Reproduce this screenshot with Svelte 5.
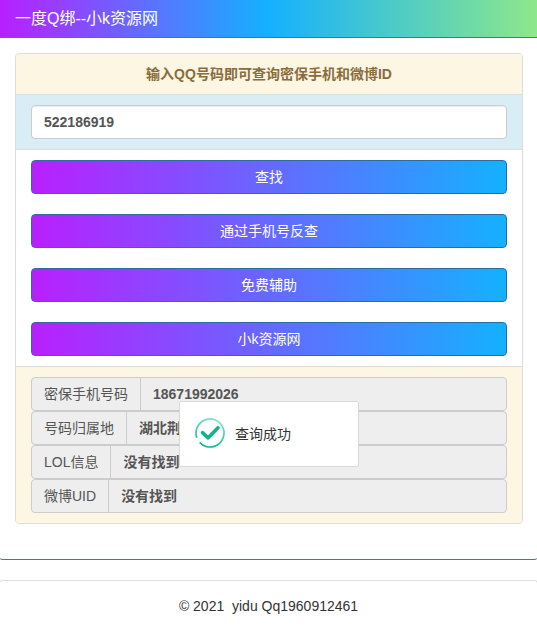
<script lang="ts">
	const actions = ['查找', '通过手机号反查', '免费辅助', '小k资源网'];

	const results = [
		{ label: '密保手机号码', value: '18671992026' },
		{ label: '号码归属地', value: '湖北荆州' },
		{ label: 'LOL信息', value: '没有找到' },
		{ label: '微博UID', value: '没有找到' }
	];
</script>

<div class="page">
	<section class="panel-main">
		<header class="main-heading">一度Q绑--小k资源网</header>
		<div class="main-body">
			<div class="panel">
				<div class="item tips">输入QQ号码即可查询密保手机和微博ID</div>
				<div class="item search">
					<input class="field" type="text" value="522186919" />
				</div>
				<div class="item buttons">
					{#each actions as action}
						<button class="btn" type="button">{action}</button>
					{/each}
				</div>
				<div class="item results">
					{#each results as row}
						<div class="group">
							<span class="addon">{row.label}</span>
							<span class="value">{row.value}</span>
						</div>
					{/each}
				</div>
			</div>
		</div>
	</section>

	<footer class="footer">© 2021&nbsp; yidu Qq1960912461</footer>

	<div class="toast">
		<svg class="toast-icon" width="30" height="30" viewBox="0 0 30 30" fill="none">
			<defs>
				<linearGradient id="ring" gradientUnits="userSpaceOnUse" x1="24" y1="3" x2="6" y2="27">
					<stop offset="0" stop-color="#0fb592" />
					<stop offset="1" stop-color="#7fe3d0" />
				</linearGradient>
			</defs>
			<circle cx="15" cy="15" r="14" stroke="url(#ring)" stroke-width="1.7" stroke-dasharray="82 6" transform="rotate(160 15 15)" />
			<path d="M7.5 14.6 L13.2 19.8 L23 9.8" stroke="#10b48f" stroke-width="3.6" stroke-linecap="round" stroke-linejoin="round" />
		</svg>
		<span>查询成功</span>
	</div>
</div>

<style>
	:global(body) {
		margin: 0;
		background: #fff;
		font-family: 'Liberation Sans', 'Noto Sans CJK SC', sans-serif;
		font-size: 14px;
		line-height: 20px;
		color: #333;
	}

	.page {
		position: relative;
		height: 630px;
		overflow: hidden;
	}

	.panel-main {
		height: 560px;
		box-sizing: border-box;
		margin: 0 -1px;
		border-bottom: 1px solid #337ab7;
		border-radius: 0 0 4px 4px;
	}

	.main-heading {
		box-sizing: border-box;
		height: 38px;
		padding: 9px 16px;
		font-size: 16px;
		line-height: 20px;
		color: #fff;
		border-bottom: 1px solid #337ab7;
		background: linear-gradient(to right, #b91fff 0%, #14b1ff 50%, #8ee88a 100%);
	}

	.main-body {
		padding: 15px 15px 15px 16px;
	}

	.panel {
		border: 1px solid #ddd;
		border-radius: 4px;
		overflow: hidden;
	}

	.item {
		border-bottom: 1px solid #ddd;
	}

	.item:last-child {
		border-bottom: 0;
	}

	.tips {
		box-sizing: border-box;
		height: 41px;
		padding: 10px 15px;
		background: #fcf6e3;
		color: #8a6d3b;
		font-weight: bold;
		text-align: center;
	}

	.search {
		padding: 10px 15px;
		background: #d9edf7;
	}

	.field {
		display: block;
		box-sizing: border-box;
		width: 100%;
		height: 34px;
		padding: 6px 12px;
		border: 1px solid #ccc;
		border-radius: 4px;
		background: #fff;
		color: #555;
		font: bold 14px 'Liberation Sans', 'Noto Sans CJK SC', sans-serif;
		box-shadow: inset 0 1px 1px rgba(0, 0, 0, 0.075);
	}

	.buttons {
		display: flex;
		flex-direction: column;
		gap: 20px;
		padding: 10px 15px;
		background: #fff;
	}

	.btn {
		display: block;
		box-sizing: border-box;
		width: 100%;
		height: 34px;
		padding: 6px 12px;
		border: 1px solid #2e6da4;
		border-radius: 4px;
		background: linear-gradient(to right, #b91fff, #14b1ff);
		color: #fff;
		font: 14px/20px 'Liberation Sans', 'Noto Sans CJK SC', sans-serif;
	}

	.results {
		padding: 10px 15px;
		background: #fcf6e3;
	}

	.group {
		display: flex;
		box-sizing: border-box;
		height: 34px;
		border: 1px solid #ccc;
		border-radius: 4px;
		background: #eee;
		color: #555;
	}

	.addon {
		padding: 6px 12px;
		border-right: 1px solid #ccc;
		white-space: nowrap;
	}

	.value {
		flex: 1;
		padding: 6px 12px;
		font-weight: bold;
	}

	.footer {
		box-sizing: border-box;
		height: 60px;
		margin: 20px -1px 0;
		padding: 15px;
		border: 1px solid #ddd;
		border-bottom: 0;
		border-radius: 4px 4px 0 0;
		text-align: center;
		color: #333;
	}

	.toast {
		position: absolute;
		left: 179px;
		top: 401px;
		box-sizing: border-box;
		display: flex;
		align-items: center;
		gap: 10px;
		width: 180px;
		height: 66px;
		padding: 0 15px;
		background: #fff;
		border: 1px solid #d9d9d9;
		border-radius: 2px;
		color: #333;
	}

	.toast-icon {
		flex: none;
		margin-bottom: 2px;
	}
</style>
